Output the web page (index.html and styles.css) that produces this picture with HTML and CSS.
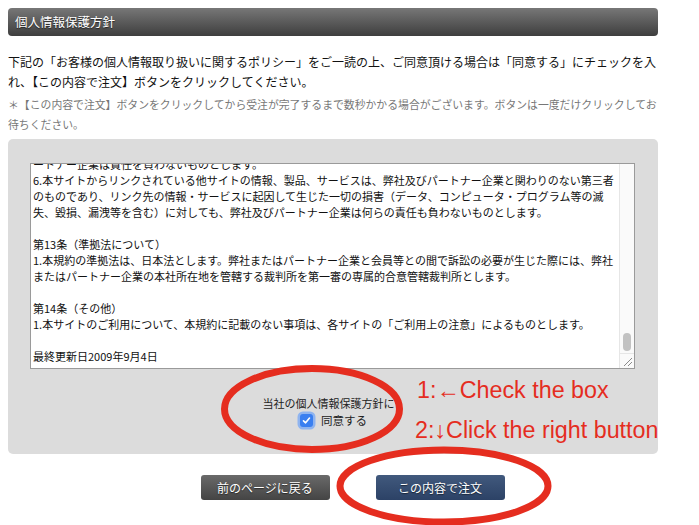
FILE: index.html
```html
<!DOCTYPE html>
<html lang="ja">
<head>
	<meta charset="UTF-8">
	<title>個人情報保護方針</title>
	<link rel="stylesheet" href="styles.css">
</head>
<body>
	<div class="page">
		<h2 class="title">個人情報保護方針</h2>

		<p class="lead">下記の「お客様の個人情報取り扱いに関するポリシー」をご一読の上、ご同意頂ける場合は「同意する」にチェックを入れ、【この内容で注文】ボタンをクリックしてください。</p>
		<p class="note">＊【この内容で注文】ボタンをクリックしてから受注が完了するまで数秒かかる場合がございます。ボタンは一度だけクリックしてお待ちください。</p>

		<div class="agree-box">
			<div class="policy">
				<div class="policy-text">
					<div class="cut">ートナー企業は責任を負わないものとします。</div>
					<div>6.本サイトからリンクされている他サイトの情報、製品、サービスは、弊社及びパートナー企業と関わりのない第三者</div>
					<div>のものであり、リンク先の情報・サービスに起因して生じた一切の損害（データ、コンピュータ・プログラム等の滅</div>
					<div>失、毀損、漏洩等を含む）に対しても、弊社及びパートナー企業は何らの責任も負わないものとします。</div>
					<div class="blank"></div>
					<div>第13条（準拠法について）</div>
					<div>1.本規約の準拠法は、日本法とします。弊社またはパートナー企業と会員等との間で訴訟の必要が生じた際には、弊社</div>
					<div>またはパートナー企業の本社所在地を管轄する裁判所を第一審の専属的合意管轄裁判所とします。</div>
					<div class="blank"></div>
					<div>第14条（その他）</div>
					<div>1.本サイトのご利用について、本規約に記載のない事項は、各サイトの「ご利用上の注意」によるものとします。</div>
					<div class="blank"></div>
					<div>最終更新日2009年9月4日</div>
				</div>
				<div class="scrollbar">
					<div class="track"><span class="thumb"></span></div>
					<div class="resizer">
						<svg width="14" height="14" viewBox="0 0 14 14"><path d="M4 12 L12 4 M8 12 L12 8" stroke="#8a8a8a" stroke-width="1"/></svg>
					</div>
				</div>
			</div>

			<div class="consent">
				<div>当社の個人情報保護方針に</div>
				<label class="check-row">
					<span class="check">
						<svg width="9" height="9" viewBox="0 0 9 9"><path d="M1.5 4.8 L3.6 6.8 L7.5 2" fill="none" stroke="#fff" stroke-width="1.6" stroke-linecap="round" stroke-linejoin="round"/></svg>
					</span>
					同意する
				</label>
			</div>
		</div>

		<div class="buttons">
			<a class="btn btn-back" href="">前のページに戻る</a>
			<a class="btn btn-order" href="">この内容で注文</a>
		</div>
	</div>

	<!-- 注釈 -->
	<svg class="marks" width="699" height="525" viewBox="0 0 699 525">
		<ellipse cx="312" cy="409" rx="87.5" ry="40.5" fill="none" stroke="#e52d1f" stroke-width="7"/>
		<ellipse cx="444" cy="486" rx="104" ry="36" fill="none" stroke="#e52d1f" stroke-width="7"/>
	</svg>
	<div class="hint hint-1">1:←Check the box</div>
	<div class="hint hint-2">2:↓Click the right button</div>
</body>
</html>
```

FILE: styles.css
```css
*{
	padding: 0;
	margin: 0;
	box-sizing: border-box;
}
body {
	margin: 8px;
	background: #fff;
	font-family: "Noto Sans CJK JP", "Liberation Sans", sans-serif;
	color: #222;
}
a {
	text-decoration: none;
}
.page {
	width: 650px;
}
.title {
	height: 28px;
	line-height: 28px;
	padding-left: 7px;
	font-size: 12.5px;
	font-weight: normal;
	color: #fff;
	text-shadow: 0 1px 1px rgba(0,0,0,0.6);
	background: linear-gradient(#777, #3e3e3e);
	border-radius: 4px;
}
.lead {
	margin-top: 16px;
	font-size: 12px;
	line-height: 20px;
	color: #111;
}
.note {
	margin-top: 2px;
	font-size: 10.85px;
	line-height: 20px;
	color: #777;
}
.agree-box {
	margin-top: 5px;
	background: #dcdcdc;
	border-radius: 5px;
	padding: 24px 23px 0 22px;
	height: 315px;
}
.policy {
	display: flex;
	height: 206px;
	background: #fff;
	border: 1px solid #9a9a9a;
}
.policy-text {
	flex: 1;
	overflow: hidden;
	padding: 0 2px 4px 2px;
	font-size: 11px;
	line-height: 16px;
	color: #111;
	white-space: nowrap;
}
/* 上にスクロールされた行 */
.policy-text .cut {
	margin-top: -8px;
}
.policy-text .blank {
	height: 16px;
}
.scrollbar {
	width: 15px;
	display: flex;
	flex-direction: column;
	background: #fafafa;
	border-left: 1px solid #e6e6e6;
}
.track {
	flex: 1;
	display: flex;
	flex-direction: column;
	justify-content: flex-end;
	align-items: center;
	padding-bottom: 2px;
}
.thumb {
	width: 8px;
	height: 18px;
	border-radius: 4px;
	background: #c2c2c2;
}
.resizer {
	height: 15px;
	border-top: 1px solid #e6e6e6;
}
.resizer svg {
	display: block;
}
.consent {
	margin-top: 26px;
	padding-right: 8px;
	text-align: center;
	font-size: 11px;
	line-height: 17px;
	color: #222;
}
.check-row {
	display: inline-flex;
	align-items: center;
	gap: 8px;
	margin-left: 10px;
	font-size: 11.5px;
}
.check {
	width: 13px;
	height: 13px;
	border-radius: 3px;
	background: #3a7ff0;
	box-shadow: 0 0 0 2.5px #8fb4ef;
	display: flex;
	align-items: center;
	justify-content: center;
}
.check svg {
	display: block;
}
.buttons {
	display: flex;
	justify-content: center;
	gap: 46px;
	padding-left: 39px;
	margin-top: 21px;
}
.btn {
	width: 129px;
	height: 25px;
	line-height: 25px;
	text-align: center;
	font-size: 12px;
	color: #fff;
	border-radius: 3px;
	text-shadow: 0 1px 1px rgba(0,0,0,0.5);
}
.btn-back {
	background: linear-gradient(#6a6a6a, #444);
}
.btn-order {
	background: linear-gradient(#41597d, #2c4266);
}
.marks {
	position: absolute;
	left: 0;
	top: 0;
	pointer-events: none;
}
.hint {
	position: absolute;
	font-family: "Liberation Sans", Arial, sans-serif;
	font-size: 23.3px;
	line-height: 27px;
	color: #e52d1f;
	white-space: nowrap;
}
.hint-1 {
	left: 417px;
	top: 377px;
}
.hint-2 {
	left: 415px;
	top: 417px;
}
```
